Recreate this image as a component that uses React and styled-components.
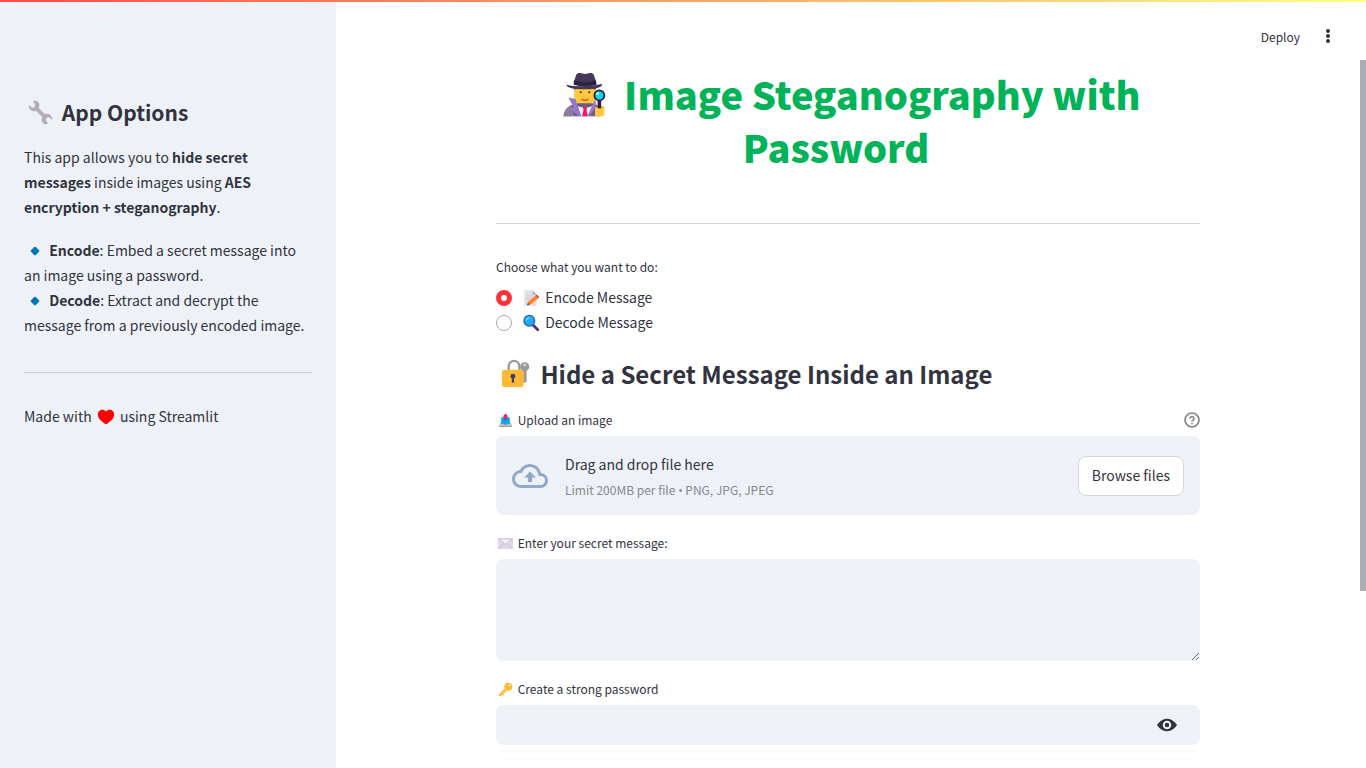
import React from 'react';
import styled, { createGlobalStyle } from 'styled-components';

const GlobalStyle = createGlobalStyle`
  *, *::before, *::after { box-sizing: border-box; }
  body {
    margin: 0;
    background: #ffffff;
    color: #31333f;
    font-family: "Noto Sans CJK SC", "Open Sans", sans-serif;
    font-size: 14px;
    line-height: 25px;
  }
  button, input, textarea { font: inherit; color: inherit; }
`;

const Shell = styled.div`
  display: flex;
  height: 100vh;
  overflow: hidden;
`;

const Decoration = styled.div`
  position: absolute;
  top: 0;
  left: 0;
  right: 0;
  height: 2px;
  background: linear-gradient(90deg, #ff4b4b, #fffd80);
`;

const Sidebar = styled.aside`
  flex: 0 0 336px;
  padding: 96px 24px 24px;
  background: #eef2f7;
`;

const SideTitle = styled.h2`
  margin: 0 0 17px;
  font-size: 21px;
  line-height: 32px;
  font-weight: 600;
`;

const Paragraph = styled.p`
  margin: 0 0 18px;
`;

const Strong = styled.strong`
  font-weight: 600;
`;

const Rule = styled.hr`
  height: 1px;
  margin: ${({ $top }) => $top}px 0 31px;
  border: 0;
  background: ${({ $color }) => $color};
`;

const Workspace = styled.div`
  flex: 1;
  min-width: 0;
  display: flex;
  flex-direction: column;
`;

const Header = styled.header`
  display: flex;
  justify-content: flex-end;
  align-items: center;
  gap: 18px;
  flex: 0 0 60px;
  padding: 12px 28px 0 0;
`;

const ToolButton = styled.button`
  display: flex;
  align-items: center;
  padding: 0;
  border: 0;
  background: none;
  font-size: 12px;
  cursor: pointer;
`;

const Scroller = styled.div`
  flex: 1;
  min-height: 0;
  display: flex;
`;

const Main = styled.main`
  flex: 1;
  min-width: 0;
  overflow: hidden;
`;

const ScrollTrack = styled.div`
  flex: 0 0 6px;
`;

const ScrollThumb = styled.div`
  height: 75%;
  background: #acadb2;
`;

const Column = styled.div`
  max-width: 736px;
  margin: 0 auto;
  padding: 7px 16px;
`;

const Title = styled.h1`
  margin: 0 0 50px;
  color: #00b359;
  font-size: 38px;
  line-height: 53px;
  font-weight: 900;
  text-align: center;
  &::after {
    content: "";
    display: inline-block;
    width: 24px;
  }
`;

const SectionTitle = styled.h2`
  margin: 21px 0 16px;
  font-size: 24px;
  line-height: 36px;
  font-weight: 600;
`;

const RadioGroup = styled.fieldset`
  margin: 0;
  padding: 0;
  border: 0;
`;

const Legend = styled.legend`
  margin-bottom: 6px;
  padding: 0;
  font-size: 12px;
  line-height: 24px;
`;

const RadioLabel = styled.label`
  display: flex;
  align-items: center;
  gap: 8px;
  cursor: pointer;
`;

const Radio = styled.input`
  appearance: none;
  width: 16px;
  height: 16px;
  margin: 0;
  border: 1px solid #a9abb1;
  border-radius: 50%;
  background: #ffffff;
  &:checked { border: 5px solid #ff3338; }
`;

const FieldHead = styled.div`
  display: flex;
  justify-content: space-between;
  align-items: center;
  height: 24px;
  margin-bottom: 4px;
`;

const FieldLabel = styled.label`
  font-size: 12px;
  line-height: 24px;
`;

const HelpButton = styled.button`
  display: flex;
  padding: 0;
  border: 0;
  background: none;
`;

const Dropzone = styled.section`
  display: flex;
  align-items: center;
  gap: 17px;
  min-height: 79px;
  margin-bottom: 16px;
  padding: 0 16px;
  border-radius: 8px;
  background: #eef2f7;
`;

const DropText = styled.div`
  flex: 1;
  padding-top: 3px;
`;

const DropHint = styled.div`
  color: #868891;
  font-size: 12px;
`;

const Bullet = styled.span`
  font-family: "Open Sans", sans-serif;
`;

const BrowseButton = styled.button`
  height: 40px;
  padding: 0 13px;
  border: 1px solid #d5d6d9;
  border-radius: 8px;
  background: #ffffff;
  cursor: pointer;
`;

const MessageBox = styled.textarea`
  display: block;
  width: 100%;
  height: 102px;
  margin-bottom: 16px;
  padding: 12px;
  border: 0;
  border-radius: 8px;
  background: #eef2f7;
  resize: vertical;
`;

const PasswordField = styled.div`
  display: flex;
  height: 40px;
  margin-bottom: 5px;
  padding-right: 23px;
  border-radius: 8px;
  background: #eef2f7;
`;

const PasswordInput = styled.input`
  flex: 1;
  padding: 0 12px;
  border: 0;
  background: transparent;
`;

const PendingBar = styled.div`
  height: 10px;
  margin: 0 6px;
  border: solid #fafafa;
  border-width: 1px 0;
`;

const EmojiSvg = styled.svg`
  width: ${({ $size }) => $size}px;
  height: ${({ $size }) => $size}px;
  margin: 0 ${({ $gap }) => $gap}px;
  vertical-align: ${({ $drop }) => -$drop}px;
`;

const SIZES = {
  small: { $size: 15, $gap: 2, $drop: 3 },
  body: { $size: 18, $gap: 2, $drop: 4 },
  side: { $size: 25, $gap: 4, $drop: 4 },
  section: { $size: 31, $gap: 4, $drop: 5 },
  title: { $size: 46, $gap: 7, $drop: 7 },
};

const Emoji = ({ size, children }) => (
  <EmojiSvg viewBox="0 0 32 32" aria-hidden="true" {...SIZES[size]}>{children}</EmojiSvg>
);

const Wrench = () => (
  <Emoji size="side">
    <path d="M9 9 23 23" stroke="#b4acbc" strokeWidth="5" />
    <path d="M6.500 1.500C11 0 15 3 14.500 7.500 14 12.500 10 15.500 5.500 14 2.500 13 .5 10 1 6.500l4.500 3.500q4-1 3.500-4z" fill="#b4acbc" />
    <path d="M25.500 30.500C21 32 17 29 17.500 24.500c.5-5 4.500-8 9-6.500 3 1 5 4 4.500 7.500L26.500 22q-4 1-3.500 4z" fill="#b4acbc" />
  </Emoji>
);

const Diamond = () => (
  <Emoji size="body">
    <path d="M14.500 9q1.500-1.500 3 0l5.500 5.500q1.500 1.500 0 3L17.500 23q-1.500 1.500-3 0L9 17.500q-1.500-1.500 0-3z" fill="#0074ba" />
  </Emoji>
);

const Heart = () => (
  <Emoji size="body">
    <path d="M16 6.500C12 1 1.500 2.500 1.500 12c0 8 9 13 12.500 16q2 1.500 4 0c3.500-3 12.500-8 12.500-16C30.500 2.500 20 1 16 6.500z" fill="#ff0000" />
  </Emoji>
);

const Detective = () => (
  <Emoji size="title">
    <path d="M8.500 11h15v6c0 5.500-3.500 8-7.500 8s-7.500-2.500-7.500-8z" fill="#ffc83d" />
    <path d="M8.500 11h15v2c-4-1.500-11-1.500-15 0z" fill="#45385a" />
    <circle cx="13" cy="14.700" r=".7" fill="#402a32" />
    <circle cx="19" cy="14.700" r=".7" fill="#402a32" />
    <path d="M13.500 19.500q2.500 1.800 5 0" fill="none" stroke="#c2403a" strokeWidth=".8" />
    <path d="M1 31.500c.5-4 2.500-6.500 6-8l4-1h10l3 1c2 1 3 4 3 8z" fill="#6b5b86" />
    <path d="M1 31.500c.5-4 2-6 5.500-7.500l2 7.500z" fill="#8a7f9b" />
    <path d="M11 24.500q5 2 10 0l-2 7h-6z" fill="#f3eef8" />
    <path d="M14.500 25h3l-.5 2 1 4.500h-4L15 27z" fill="#f8145e" />
    <path d="m4.500 18.500 5 1 1 4 3 8h-2L6 26.500l2-1.500zM22 22l1.500-3v6l-4.500 6.500h-1.500z" fill="#9778cc" />
    <path d="M10 2.500c1.500-2 4-.5 6-.5s4.500-1.500 6 .5l2 5.500-8 1.500L8 8z" fill="#45385a" />
    <path d="M8.500 6.500q7.500 3 15 0l.5 3q-8 2.500-16 0z" fill="#2b2440" />
    <path d="M3 9.500q6 1.500 13 1t12-1.500q0 3.500-12 3.700Q3.500 12.700 3 9.500z" fill="#45385a" />
    <path d="M23 25.500q3-2 6.500-1v6q0 1-1.500 1h-5z" fill="#ffc83d" />
    <path d="M26 20v6" stroke="#321b41" strokeWidth="2.500" />
    <circle cx="26" cy="17" r="3.500" fill="#00d8ee" stroke="#321b41" strokeWidth="1.200" />
    <circle cx="24.800" cy="15.800" r="1" fill="#d9fcff" />
  </Emoji>
);

const Memo = () => (
  <Emoji size="body">
    <path d="M4 2h15l7 8v20H4z" fill="#e4dfe9" />
    <path d="M19 2v8h7z" fill="#b4acbc" />
    <path d="M8 12h12M8 17h9M8 22h7" stroke="#c9c2d1" strokeWidth="1.500" />
    <path d="m9 29 2.500-7L24 11.500l5 5L16 27z" fill="#ff822d" />
    <path d="m24 11.500 1.500-1.500q4 1 5 5l-1.500 1.500z" fill="#ec1c48" />
    <path d="m9 29 1.500-4.500 3 3z" fill="#433b6b" />
  </Emoji>
);

const Magnifier = () => (
  <Emoji size="body">
    <path d="m19.500 19.500 8.500 8.500" stroke="#533566" strokeWidth="5" strokeLinecap="round" />
    <circle cx="13" cy="12" r="9.500" fill="#26a9f1" stroke="#1469c4" strokeWidth="2.500" />
    <path d="M7.500 11q1-4 5-4.500" fill="none" stroke="#8bdcff" strokeWidth="2" strokeLinecap="round" />
  </Emoji>
);

const LockKey = () => (
  <Emoji size="section">
    <path d="M9 14V9c0-8 11-8 11 0v5" fill="none" stroke="#9b9b9b" strokeWidth="2.500" />
    <path d="M27.500 9v15l-2 2-2-2V9z" fill="#9b9b9b" />
    <circle cx="25.500" cy="9" r="4.700" fill="#9b9b9b" />
    <circle cx="25.500" cy="7.300" r="1.300" fill="#e6e6e6" />
    <rect x="2" y="12" width="22.500" height="18" rx="3" fill="#ffb935" />
    <circle cx="13.300" cy="18.800" r="2.500" fill="#433b6b" />
    <path d="M12.200 20h2.200v5.500h-2.200z" fill="#433b6b" />
  </Emoji>
);

const Outbox = () => (
  <Emoji size="small">
    <path d="M6 20h20l3 6v4H3v-4z" fill="#9b9b9b" />
    <path d="M7 9h18v14H7z" fill="#00a6ed" />
    <path d="M5 24h6l2 2h6l2-2h6v3H5z" fill="#d3d3d3" />
    <path d="m16 1 6 7h-3.500v7h-5V8H10z" fill="#f8145e" />
  </Emoji>
);

const Envelope = () => (
  <Emoji size="small">
    <path d="M1 6h30v21H1z" fill="#e1d8ec" />
    <path d="m1 27 11-11M31 27 20 16" stroke="#b7aebf" strokeWidth="1.500" />
    <path d="m1 6 15 12L31 6z" fill="#f3eef8" stroke="#b7aebf" strokeWidth="1.500" />
    <path d="M1 6h30v21H1z" fill="none" stroke="#cdc4d6" strokeWidth="1" />
  </Emoji>
);

const KeyEmoji = () => (
  <Emoji size="small">
    <path d="M18 14 4.500 27.500" stroke="#ffb935" strokeWidth="5" strokeLinecap="round" />
    <path d="m8 25 4 3M13 20l3 3" stroke="#ffb935" strokeWidth="3" />
    <circle cx="22" cy="10" r="8.500" fill="#ffb935" />
    <circle cx="25" cy="7" r="2.300" fill="#fff" />
  </Emoji>
);

const CloudUpload = () => (
  <svg width="36" height="36" viewBox="0 0 24 24" fill="#93a8c8" aria-hidden="true">
    <path d="M19.350 10.040A7.490 7.490 0 0012 4C9.110 4 6.600 5.640 5.350 8.040A5.994 5.994 0 000 14c0 3.310 2.690 6 6 6h13c2.760 0 5-2.240 5-5 0-2.640-2.050-4.780-4.650-4.960zM19 18H6c-2.210 0-4-1.790-4-4 0-2.050 1.530-3.760 3.560-3.970l1.070-.11.5-.95A5.469 5.469 0 0112 6c2.620 0 4.880 1.860 5.390 4.430l.3 1.500 1.530.11A2.980 2.980 0 0122 15c0 1.650-1.350 3-3 3zM8 13h2.550v3h2.900v-3H16l-4-4z" />
  </svg>
);

const Eye = () => (
  <svg width="20" height="20" viewBox="0 0 8 8" fill="#31333f" aria-hidden="true">
    <path d="M4.030 1.500C1.500 1.500 0 4 0 4s1.500 2.500 4.030 2.500C6.500 6.500 8 4 8 4S6.500 1.500 4.030 1.500zM4 2.300a1.700 1.700 0 110 3.400 1.700 1.700 0 010-3.400zm0 .8a.9.9 0 100 1.800.9.9 0 000-1.800z" fillRule="evenodd" />
  </svg>
);

const Help = () => (
  <svg width="16" height="16" viewBox="0 0 24 24" fill="none" stroke="#83858d" strokeWidth="2.500" strokeLinecap="round" strokeLinejoin="round" aria-hidden="true">
    <circle cx="12" cy="12" r="10.500" />
    <path d="M9.090 9a3 3 0 015.830 1c0 2-3 3-3 3M12 17.500h.01" />
  </svg>
);

const Dots = () => (
  <svg width="20" height="20" viewBox="0 0 20 20" fill="#31333f" aria-hidden="true">
    <circle cx="10" cy="5" r="2" />
    <circle cx="10" cy="10" r="2" />
    <circle cx="10" cy="15" r="2" />
  </svg>
);

export default function App() {
  return (
    <Shell>
      <GlobalStyle />
      <Decoration />
      <Sidebar>
        <SideTitle><Wrench /> App Options</SideTitle>
        <Paragraph>
          This app allows you to <Strong>hide secret messages</Strong> inside images using{' '}
          <Strong>AES encryption + steganography</Strong>.
        </Paragraph>
        <Paragraph>
          <Diamond /> <Strong>Encode</Strong>: Embed a secret message into an image using a password.
          <br />
          <Diamond /> <Strong>Decode</Strong>: Extract and decrypt the message from a previously encoded image.
        </Paragraph>
        <Rule $top={34} $color="#c9ccd2" />
        <Paragraph>Made with <Heart /> using Streamlit</Paragraph>
      </Sidebar>
      <Workspace>
        <Header>
          <ToolButton type="button">Deploy</ToolButton>
          <ToolButton type="button" aria-label="Menu"><Dots /></ToolButton>
        </Header>
        <Scroller>
          <Main>
            <Column>
              <Title><Detective /> Image Steganography with Password</Title>
              <Rule $top={32} $color="#d6d6d9" />
              <RadioGroup>
                <Legend>Choose what you want to do:</Legend>
                <RadioLabel>
                  <Radio type="radio" name="mode" defaultChecked />
                  <span><Memo /> Encode Message</span>
                </RadioLabel>
                <RadioLabel>
                  <Radio type="radio" name="mode" />
                  <span><Magnifier /> Decode Message</span>
                </RadioLabel>
              </RadioGroup>
              <SectionTitle><LockKey /> Hide a Secret Message Inside an Image</SectionTitle>
              <FieldHead>
                <FieldLabel htmlFor="browse"><Outbox /> Upload an image</FieldLabel>
                <HelpButton type="button" aria-label="Help"><Help /></HelpButton>
              </FieldHead>
              <Dropzone>
                <CloudUpload />
                <DropText>
                  <div>Drag and drop file here</div>
                  <DropHint>Limit 200MB per file <Bullet>•</Bullet> PNG, JPG, JPEG</DropHint>
                </DropText>
                <BrowseButton id="browse" type="button">Browse files</BrowseButton>
              </Dropzone>
              <FieldHead>
                <FieldLabel htmlFor="message"><Envelope /> Enter your secret message:</FieldLabel>
              </FieldHead>
              <MessageBox id="message" />
              <FieldHead>
                <FieldLabel htmlFor="password"><KeyEmoji /> Create a strong password</FieldLabel>
              </FieldHead>
              <PasswordField>
                <PasswordInput id="password" type="password" />
                <ToolButton type="button" aria-label="Show password"><Eye /></ToolButton>
              </PasswordField>
              <PendingBar />
            </Column>
          </Main>
          <ScrollTrack><ScrollThumb /></ScrollTrack>
        </Scroller>
      </Workspace>
    </Shell>
  );
}
